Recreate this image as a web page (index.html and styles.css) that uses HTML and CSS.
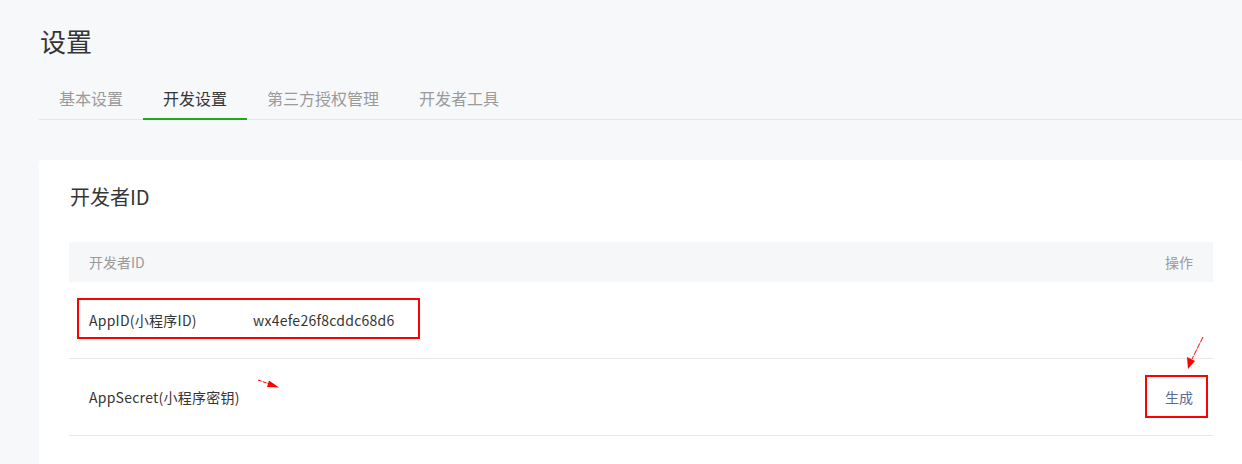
FILE: index.html
```html
<!DOCTYPE html>
<html lang="zh-CN">
<head>
<meta charset="utf-8">
<title>设置</title>
<link rel="stylesheet" href="styles.css">
</head>
<body>
<div class="page">
  <h1 class="page-title">设置</h1>
  <nav class="tabs">
    <a class="tab">基本设置</a>
    <a class="tab active">开发设置</a>
    <a class="tab">第三方授权管理</a>
    <a class="tab">开发者工具</a>
  </nav>
  <section class="card">
    <h2 class="card-title">开发者ID</h2>
    <div class="table">
      <div class="thead">
        <span>开发者ID</span>
        <span>操作</span>
      </div>
      <div class="row">
        <span class="label">AppID(小程序ID)</span>
        <span class="value">wx4efe26f8cddc68d6</span>
      </div>
      <div class="row">
        <span class="label">AppSecret(小程序密钥)</span>
        <a class="action">生成</a>
      </div>
    </div>
  </section>
</div>
<svg class="annotations" width="1242" height="464" viewBox="0 0 1242 464">
  <rect x="78" y="299" width="341" height="39" fill="none" stroke="#ff0000" stroke-width="2"/>
  <rect x="1146" y="376" width="61" height="41" fill="none" stroke="#ff0000" stroke-width="2"/>
  <line x1="258" y1="380" x2="271" y2="384.5" stroke="#ff0000" stroke-width="1" stroke-dasharray="4 1"/>
  <polygon points="279,387.5 269,380.5 267,387" fill="#ff0000"/>
  <line x1="1203" y1="337" x2="1192" y2="359" stroke="#ff0000" stroke-width="1" stroke-dasharray="6 1"/>
  <polygon points="1188,369 1187,357 1195,361" fill="#ff0000"/>
</svg>
</body>
</html>
```

FILE: styles.css
```css
html, body {
  margin: 0;
  padding: 0;
}
body {
  background: #f7f8fa;
  font-family: "Noto Sans CJK SC", "Microsoft YaHei", sans-serif;
  color: #353535;
  width: 1242px;
  height: 464px;
  overflow: hidden;
  position: relative;
}
.page {
  padding: 0 0 0 39px;
  width: 1204px;
}
.page-title {
  margin: 0;
  padding: 23px 0 0 1px;
  height: 40px;
  font-size: 26px;
  line-height: 36px;
  font-weight: normal;
  color: #353535;
}
.tabs {
  margin-top: 17px;
  display: flex;
  border-bottom: 1px solid #e4e6eb;
  height: 39px;
  width: 1204px;
}
.tab {
  padding: 0 20px;
  font-size: 16px;
  line-height: 36px;
  color: #9a9a9a;
  border-bottom: 2px solid transparent;
  margin-bottom: -1px;
  height: 38px;
  cursor: pointer;
}
.tab.active {
  color: #353535;
  border-bottom-color: #1aad19;
}
.card {
  margin-top: 40px;
  background: #ffffff;
  border-radius: 4px;
  padding: 22px 30px 40px 30px;
  width: 1144px;
}
.card-title {
  margin: 0 0 0 1px;
  font-size: 20px;
  font-weight: normal;
  line-height: 30px;
  height: 30px;
  color: #353535;
}
.table {
  margin-top: 30px;
}
.thead {
  display: flex;
  justify-content: space-between;
  align-items: center;
  height: 40px;
  padding: 0 20px;
  background: #f6f7f9;
  font-size: 14px;
  color: #9a9a9a;
}
.row {
  display: flex;
  align-items: center;
  height: 76px;
  padding: 0 20px;
  border-bottom: 1px solid #e7e7eb;
  font-size: 14px;
  color: #353535;
  letter-spacing: 0.25px;
}
.row .label {
  width: 164px;
}
.row .action {
  margin-left: auto;
  color: #576b95;
  letter-spacing: 0;
  cursor: pointer;
}
.annotations {
  position: absolute;
  left: 0;
  top: 0;
  pointer-events: none;
}
```
